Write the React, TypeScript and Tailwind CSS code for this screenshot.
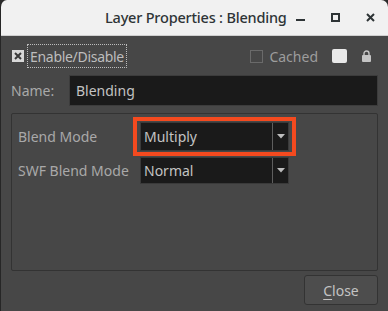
import React from 'react';

const font = { fontFamily: '"Noto Sans", "Open Sans", sans-serif' };

const Arrow: React.FC = () => (
  <svg width="8" height="5" viewBox="0 0 8 5">
    <path d="M0 0 H8 L4 4.5 Z" fill="#bdbdbd" />
  </svg>
);

const Combo: React.FC<{ value: string; h: string }> = ({ value, h }) => (
  <div className={`flex ${h} w-[149px] border border-[#3a3a3a] bg-[#1a1a1a]`}>
    <div className="flex flex-1 items-center pl-[3px] text-[14px] text-[#c3c3c3]">{value}</div>
    <div className="flex w-[16px] items-center justify-center border-l border-[#5e5e5e]">
      <Arrow />
    </div>
  </div>
);

const App: React.FC = () => {
  return (
    <div className="h-[311px] w-[388px] overflow-hidden bg-[#2b2b2b]" style={font}>
      <div className="flex h-full flex-col overflow-hidden rounded-t-[7px] border-l border-[#262626]">
        {/* Title bar */}
        <div className="relative flex h-[36px] shrink-0 items-center border-b border-[#cfcfcf] bg-[#f1f1f1]">
          <div className="absolute left-[104px] top-[7px] text-[14.5px] font-medium tracking-[-0.2px] text-[#2e3436]">
            Layer Properties : Blending
          </div>
          <div className="ml-auto flex items-center gap-[26px] pr-[13px]">
            <svg width="9" height="9" viewBox="0 0 9 9">
              <rect x="0" y="6" width="9" height="2" fill="#2e3436" />
            </svg>
            <svg width="9" height="9" viewBox="0 0 9 9">
              <rect x="1" y="1" width="7" height="7" fill="none" stroke="#2e3436" strokeWidth="2" />
            </svg>
            <svg width="9" height="9" viewBox="0 0 9 9">
              <path d="M1 1 L8 8 M8 1 L1 8" stroke="#2e3436" strokeWidth="2" />
            </svg>
          </div>
        </div>

        {/* Body */}
        <div className="flex flex-1 flex-col bg-[#474747] pl-[10px] pr-[10px]">
          <div className="mt-[8px] flex h-[24px] items-center">
            <div className="ml-[1px] flex h-[12px] w-[12px] items-center justify-center bg-[#d9d9d9]">
              <svg width="8" height="8" viewBox="0 0 8 8">
                <path d="M1 1 L7 7 M7 1 L1 7" stroke="#3a3a3a" strokeWidth="2" />
              </svg>
            </div>
            <div className="ml-[3px] flex h-[24px] items-center border border-dotted border-[#bdbdbd] px-[2px] text-[14px] tracking-[-0.3px] text-[#bdbdbd]">
              Enable/Disable
            </div>
            <div className="ml-auto flex items-center">
              <div className="h-[13px] w-[13px] border border-[#6a6a6a]" />
              <span className="ml-[6px] text-[14px] text-[#9d9d9d]">Cached</span>
              <div className="ml-[14px] h-[14px] w-[15px] rounded-[2px] bg-[#e9e9e9]" />
              <svg className="ml-[15px] mr-[7px]" width="9" height="12" viewBox="0 0 9 12">
                <path d="M2 5 V3.5 A2.5 2.5 0 0 1 7 3.5 V5" fill="none" stroke="#c4c4c4" strokeWidth="1.4" />
                <rect x="0" y="5" width="9" height="7" rx="1" fill="#c4c4c4" />
              </svg>
            </div>
          </div>

          <div className="mt-[7px] flex items-center">
            <span className="w-[58px] text-[14px] text-[#a9a9a9]">Name:</span>
            <div className="flex h-[31px] flex-1 items-center border border-[#3c3c3c] bg-[#1a1a1a] pl-[6px] text-[14px] text-[#c3c3c3]">
              Blending
            </div>
          </div>

          <div className="mt-[7px] flex h-[158px] flex-col rounded-[2px] border border-[#333333] pl-[6px] pt-[8px]">
            <div className="flex items-center">
              <span className="w-[122px] text-[14px] text-[#a9a9a9]">Blend Mode</span>
              <div className="relative">
                <span className="pointer-events-none absolute -bottom-[5px] -left-[7px] -right-[7px] -top-[5px] border-[4px] border-[#f44a1f]" />
                <Combo value="Multiply" h="h-[29px]" />
              </div>
            </div>
            <div className="mt-[6px] flex items-center">
              <span className="w-[122px] text-[14px] text-[#a9a9a9]">SWF Blend Mode</span>
              <Combo value="Normal" h="h-[27px]" />
            </div>
          </div>

          <div className="mt-[4px] flex justify-end">
            <button className="flex h-[30px] w-[74px] items-center justify-center rounded-[3px] border border-[#333333] bg-[#4d4d4d] text-[14px] text-[#c3c3c3]">
              <span>
                <span className="underline underline-offset-[3px]">C</span>lose
              </span>
            </button>
          </div>
        </div>
      </div>
    </div>
  );
};

export default App;
